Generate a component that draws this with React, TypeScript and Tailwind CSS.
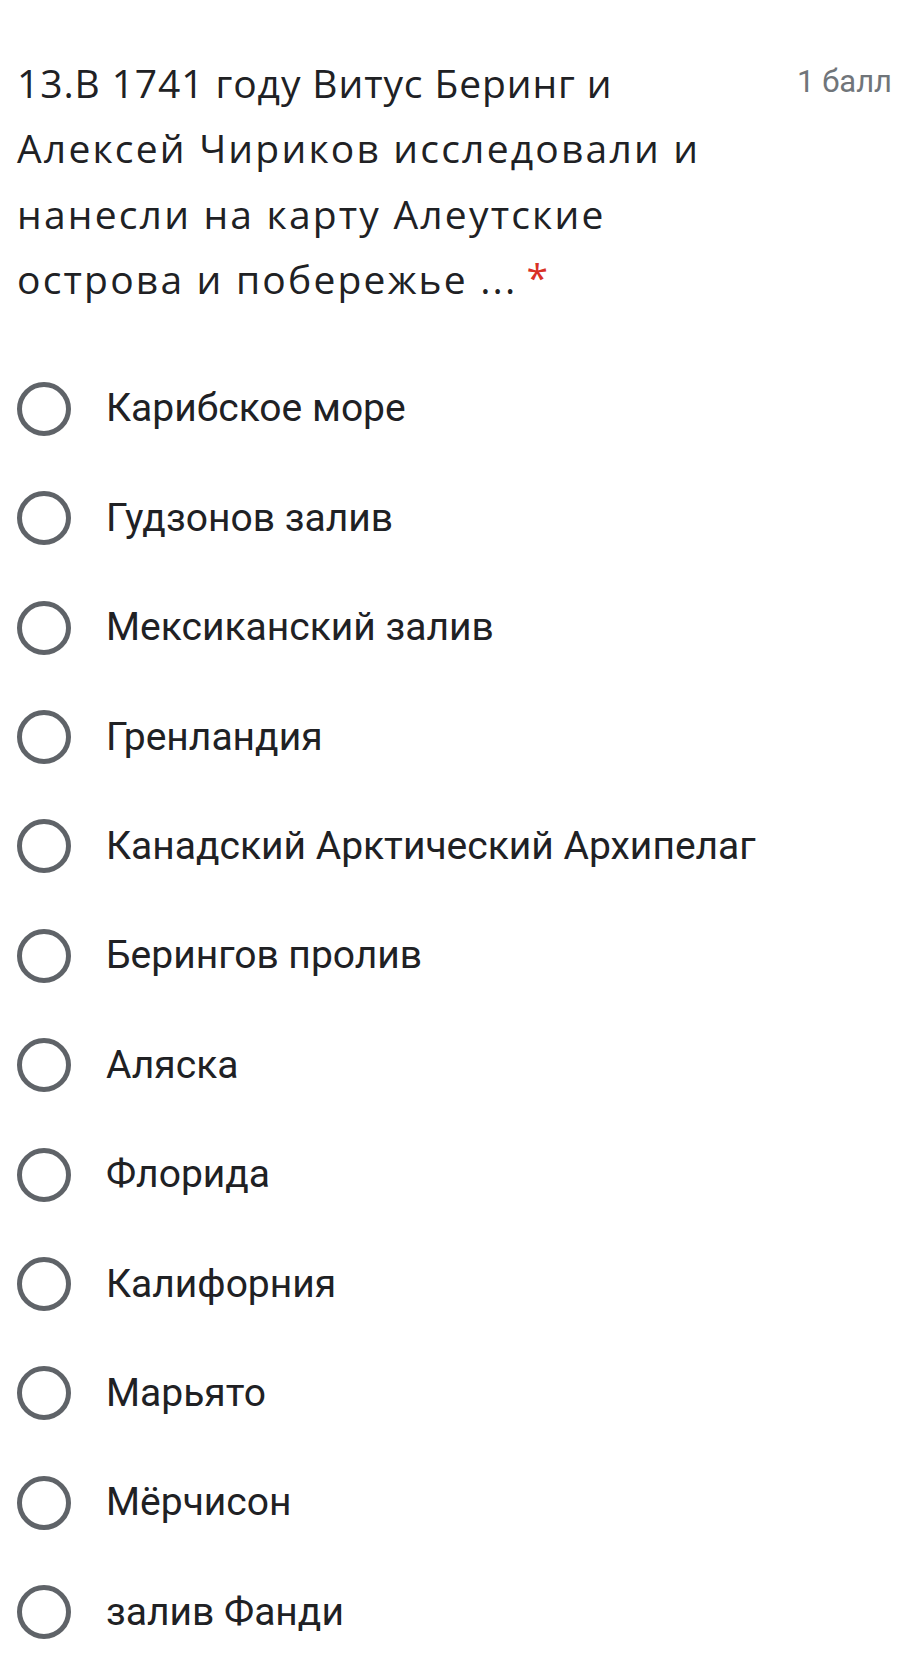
const options = [
  "Карибское море",
  "Гудзонов залив",
  "Мексиканский залив",
  "Гренландия",
  "Канадский Арктический Архипелаг",
  "Берингов пролив",
  "Аляска",
  "Флорида",
  "Калифорния",
  "Марьято",
  "Мёрчисон",
  "залив Фанди",
];

const titleLines = [
  "13.В 1741 году Витус Беринг и",
  "Алексей Чириков исследовали и",
  "нанесли на карту Алеутские",
  "острова и побережье ...",
];

export default function App() {
  return (
    <div className="min-h-[1671px] bg-white px-[17px] pt-[50px] font-['Roboto','Liberation_Sans',sans-serif] text-[#202124]">
      <div className="flex flex-row items-start justify-between">
        <div className="font-['Open_Sans','Roboto',sans-serif] text-[39px] leading-[65.3px]">
          {titleLines.map((l, i) => (
            <div key={i} className={i === 0 ? "whitespace-nowrap tracking-[0.9px]" : "whitespace-nowrap tracking-[2.2px]"}>
              {l}
              {i === titleLines.length - 1 && (
                <span className="relative top-[-2px] ml-[9px] text-[#d93025]">*</span>
              )}
            </div>
          ))}
        </div>
        <div className="pt-[2px] text-[31px] leading-[60px] text-[#70757a]">1 балл</div>
      </div>
      <div className="mt-[43px] flex flex-col">
        {options.map((o) => (
          <div key={o} className="flex h-[109.4px] flex-row items-center">
            <div className="h-[54px] w-[54px] flex-shrink-0 rounded-full border-[5px] border-[#5f6368]"></div>
            <span className="ml-[35px] text-[39px] leading-none">{o}</span>
          </div>
        ))}
      </div>
    </div>
  );
}
